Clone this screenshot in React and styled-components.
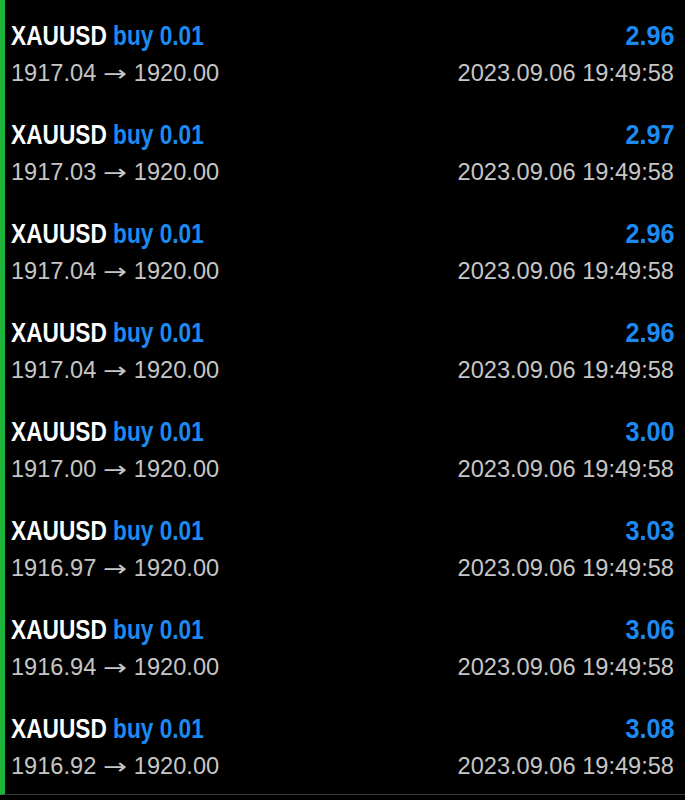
import React from "react";
import styled, { createGlobalStyle } from "styled-components";

const Global = createGlobalStyle`
  html, body { margin: 0; padding: 0; background: #000; }
  body { width: 685px; height: 800px; overflow: hidden; }
`;

const List = styled.div`
  width: 685px;
  box-sizing: border-box;
  border-left: 5px solid #1fb43a;
  border-bottom: 1px solid #3a3a3a;
  padding-bottom: 2px;
  background: #000;
`;

const Row = styled.div`
  height: 99px;
  box-sizing: border-box;
  padding: 18px 11px 0 6px;
  display: flex;
  flex-direction: column;
`;

const Line = styled.div`
  display: flex;
  justify-content: space-between;
  align-items: center;
  height: ${(p) => p.$h}px;
`;

const Title = styled.span`
  display: inline-block;
  font-family: "Liberation Sans", Arial, sans-serif;
  font-weight: 700;
  font-size: 28px;
  color: ${(p) => (p.$blue ? "#1d8af2" : "#fff")};
  white-space: pre;
  transform: scaleX(${(p) => (p.$right ? 0.9 : 0.81)});
  transform-origin: ${(p) => (p.$right ? "right" : "left")} center;
`;

const Blue = styled.span`
  color: #1d8af2;
`;

const Sub = styled.span`
  font-family: "Liberation Sans", Arial, sans-serif;
  font-size: 23.6px;
  color: #c6c6c6;
  white-space: pre;
`;

const Arrow = styled.span`
  display: inline-block;
  font-family: "DejaVu Sans", sans-serif;
  font-size: 22px;
  margin: 0 3px;
  transform: scaleX(1.3);
`;

const rows = [
  ["1917.04", "2.96"],
  ["1917.03", "2.97"],
  ["1917.04", "2.96"],
  ["1917.04", "2.96"],
  ["1917.00", "3.00"],
  ["1916.97", "3.03"],
  ["1916.94", "3.06"],
  ["1916.92", "3.08"],
];

export default function App() {
  return (
    <>
      <Global />
      <List>
        {rows.map(([open, profit], i) => (
          <Row key={i}>
            <Line $h={36}>
              <Title>
                XAUUSD <Blue>buy 0.01</Blue>
              </Title>
              <Title $blue $right>{profit}</Title>
            </Line>
            <Line $h={38}>
              <Sub>
                {open} <Arrow>→</Arrow> 1920.00
              </Sub>
              <Sub>2023.09.06 19:49:58</Sub>
            </Line>
          </Row>
        ))}
      </List>
    </>
  );
}
